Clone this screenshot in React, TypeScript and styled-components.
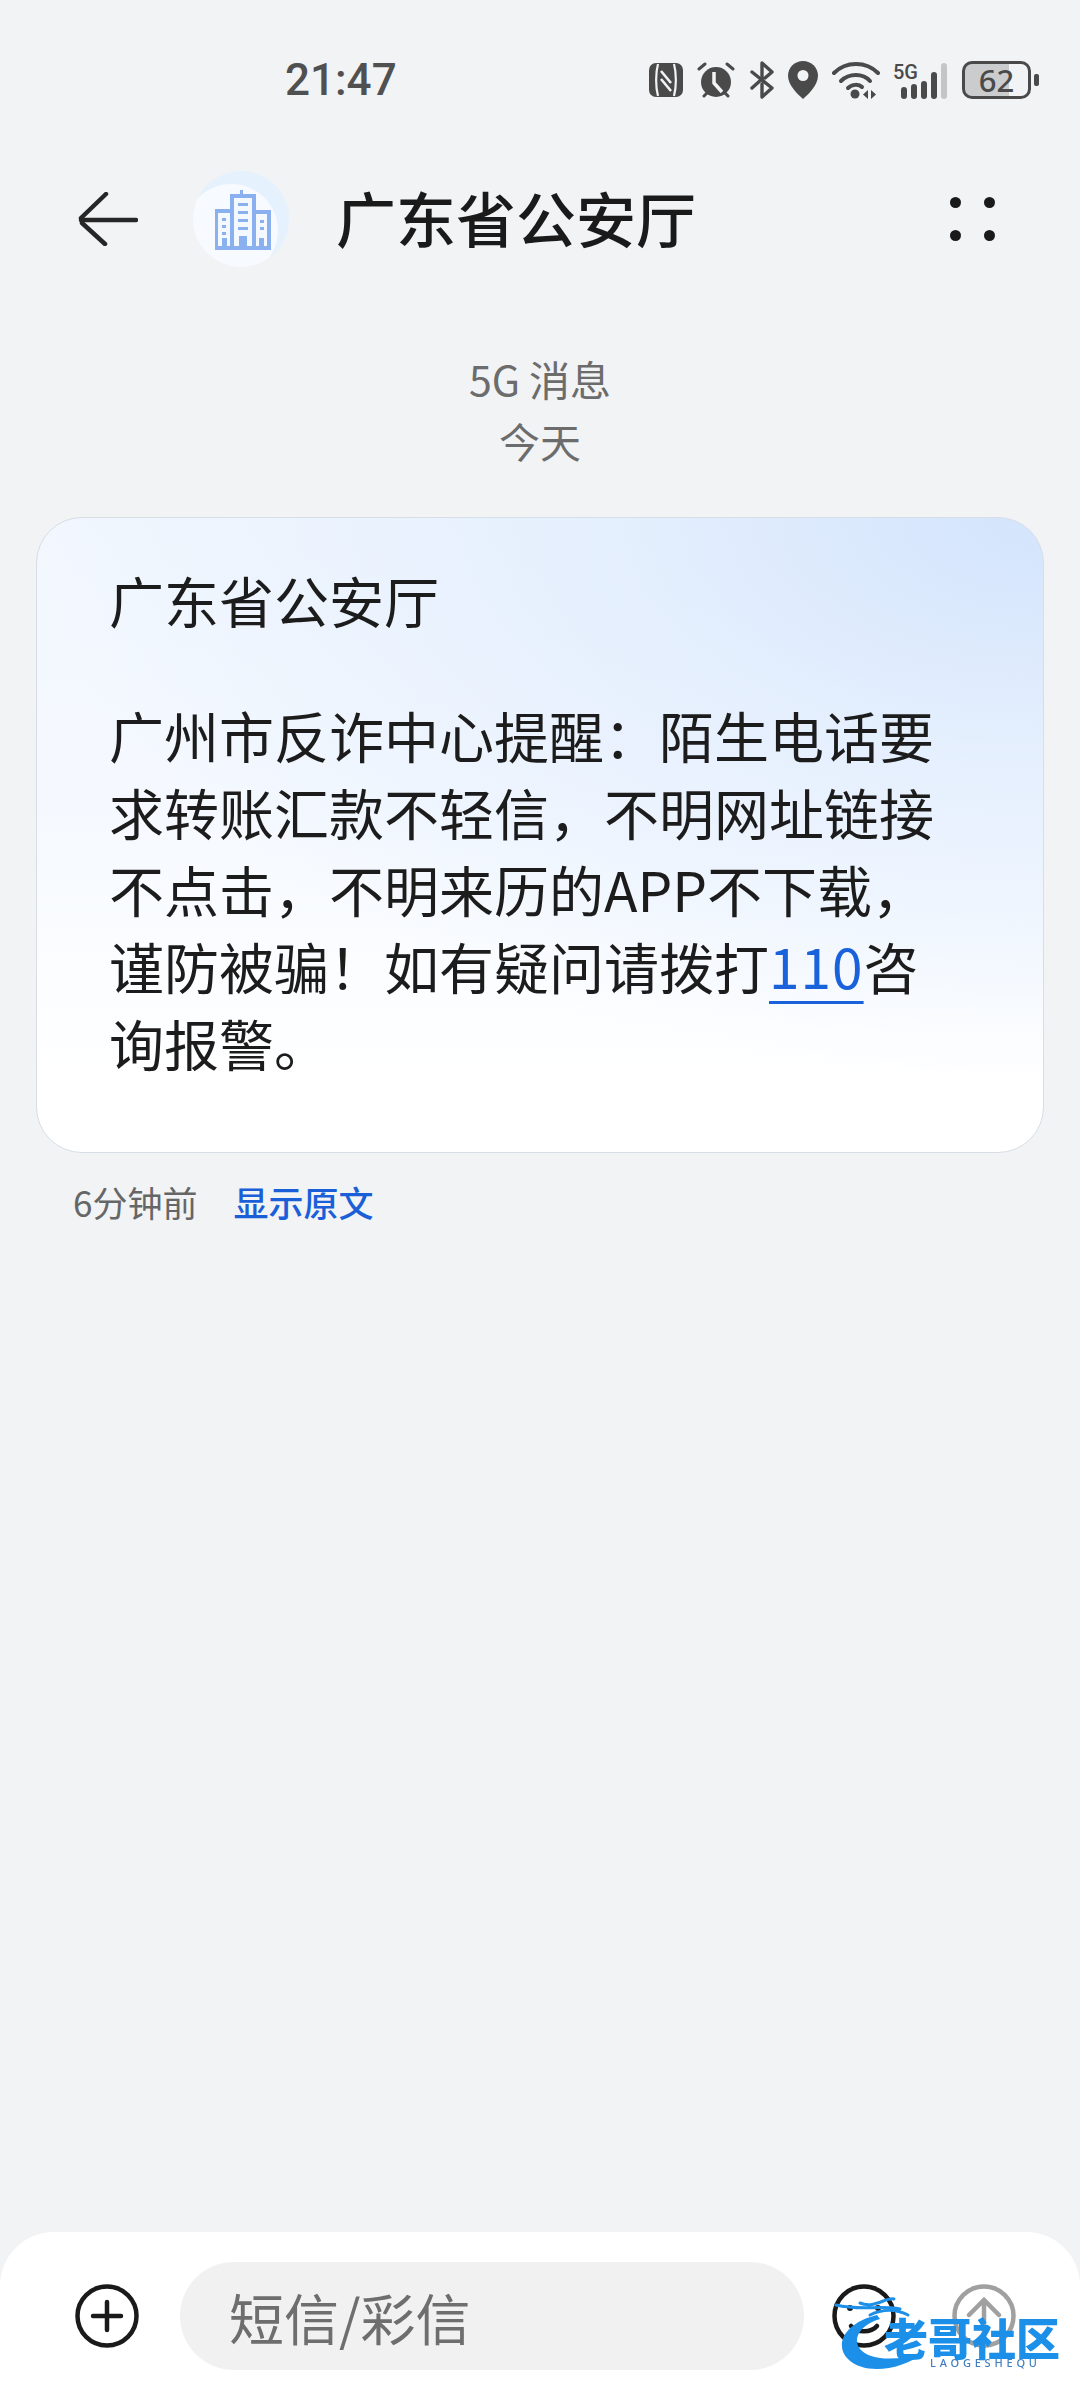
import styled, { createGlobalStyle } from "styled-components";

const GlobalStyle = createGlobalStyle`
  body {
    margin: 0;
    background: #f1f3f5;
    font-family: "Noto Sans CJK SC", "Noto Sans", sans-serif;
  }
`;

const Page = styled.div`
  position: relative;
  width: 1080px;
  height: 2400px;
  display: flex;
  flex-direction: column;
  overflow: hidden;
  background: #f1f3f5;
`;

const StatusBar = styled.div`
  height: 44px;
  margin-top: 58px;
  padding: 0 41px 0 285px;
  display: flex;
  justify-content: space-between;
  align-items: center;
`;

const Clock = styled.span`
  font-family: Roboto, sans-serif;
  font-size: 44px;
  font-weight: 500;
  line-height: 44px;
  color: #505050;
`;

const StatusIcons = styled.div`
  display: flex;
  align-items: center;
`;

const StatusIcon = styled.svg<{ $gap: number }>`
  display: block;
  margin-right: ${(p) => p.$gap}px;
  color: #4a4a4a;
`;

const Battery = styled.div<{ $level: number }>`
  width: 69px;
  height: 38px;
  box-sizing: border-box;
  display: flex;
  justify-content: center;
  align-items: center;
  border: 3px solid #4a4a4a;
  border-radius: 10px;
  background: linear-gradient(90deg, #cbccce ${(p) => p.$level}%, transparent ${(p) => p.$level}%);
  font-family: "Noto Sans", sans-serif;
  font-size: 31px;
  font-weight: 500;
  line-height: 1;
  color: #4a4a4a;
`;

const BatteryTip = styled.div`
  width: 5px;
  height: 12px;
  margin-left: 3px;
  border-radius: 2px;
  background: #4a4a4a;
`;

const Header = styled.header`
  height: 120px;
  margin-top: 57px;
  padding: 0 0 0 78px;
  display: flex;
  align-items: center;
`;

const Avatar = styled.div`
  width: 96px;
  height: 96px;
  margin-left: 55px;
  flex: none;
  display: flex;
  justify-content: center;
  align-items: center;
  border-radius: 50%;
  background: radial-gradient(circle at 40% 62%, #f7faff 0 46px, #e6f1fe 47px);
`;

const HeaderTitle = styled.h1`
  flex: 1;
  margin: 0 0 4px 47px;
  font-size: 60px;
  font-weight: 500;
  line-height: 80px;
  color: #1a1a1a;
`;

const MenuDots = styled.div`
  display: grid;
  grid-template-columns: 11px 11px;
  grid-template-rows: 11px 11px;
  gap: 22px 23px;
  margin-right: 85px;
`;

const Dot = styled.span`
  border-radius: 50%;
  background: #1a1a1a;
`;

const Notice = styled.div`
  margin-top: 68px;
  text-align: center;
  font-size: 41px;
  line-height: 62px;
  color: #6c6c6c;
`;

const Card = styled.section`
  margin: 46px 36px 0;
  padding: 43px 96px 71px 72px;
  box-sizing: border-box;
  border: 1.5px solid #d8dee6;
  border-radius: 46px;
  background:
    radial-gradient(ellipse 1000px 560px at 100% 0%, #d3e4fc 0%, rgba(222, 235, 253, 0.7) 42%, rgba(240, 246, 255, 0) 100%),
    linear-gradient(180deg, #f2f7fe 0%, #f5f9ff 45%, #fbfdff 72%, #ffffff 90%);
  font-size: 55px;
  line-height: 77px;
  color: #1c1c1c;
`;

const CardTitle = styled.div`
  margin-bottom: 58px;
`;

const CardBody = styled.div``;

const PhoneLink = styled.span`
  color: #1a62db;
  letter-spacing: 1px;
  text-decoration: underline;
  text-decoration-thickness: 3px;
  text-underline-offset: 12px;
  text-decoration-skip-ink: none;
`;

const MetaRow = styled.div`
  margin-top: 26px;
  padding-left: 73px;
  display: flex;
  gap: 36px;
  font-size: 35px;
  line-height: 46px;
`;

const Age = styled.span`
  color: #666666;
`;

const ShowOriginal = styled.span`
  color: #1a5fd8;
  font-weight: 500;
`;

const Spacer = styled.div`
  flex: 1;
`;

const Compose = styled.div`
  height: 168px;
  box-sizing: border-box;
  padding: 30px 0 30px 75px;
  display: flex;
  align-items: center;
  border-radius: 54px 54px 0 0;
  background: #ffffff;
`;

const RoundIcon = styled.svg<{ $left: number; $tone: string }>`
  flex: none;
  display: block;
  margin-left: ${(p) => p.$left}px;
  color: ${(p) => p.$tone};
`;

const Input = styled.div`
  width: 624px;
  height: 108px;
  margin-left: 41px;
  padding-left: 49px;
  box-sizing: border-box;
  display: flex;
  align-items: center;
  border-radius: 54px;
  background: #f1f1f2;
  font-size: 55px;
  color: #6e6e6e;
`;

const Watermark = styled.div`
  position: absolute;
  left: 830px;
  top: 2293px;
  width: 240px;
  height: 84px;
  filter: blur(0.7px);
`;

const Swirl = styled.svg`
  position: absolute;
  left: 0;
  top: 0;
`;

const WatermarkName = styled.div`
  position: absolute;
  left: 54px;
  top: 22px;
  font-size: 44px;
  font-weight: 900;
  line-height: 44px;
  white-space: nowrap;
  color: #1c8fe9;
`;

const WatermarkSub = styled.div`
  position: absolute;
  left: 100px;
  top: 64px;
  font-family: "Noto Sans", sans-serif;
  font-size: 11px;
  font-weight: 500;
  line-height: 11px;
  letter-spacing: 3.8px;
  white-space: nowrap;
  color: #3f7fc0;
`;

const BackArrow = () => (
  <svg width="60" height="54" viewBox="0 0 60 54" fill="none" stroke="#262626" strokeWidth="4.5" strokeLinecap="round">
    <path d="M58 28H3" />
    <path d="M3 26L28 2" />
    <path d="M4 31L27 52" />
  </svg>
);

const BuildingIcon = () => (
  <svg width="56" height="60" viewBox="0 0 56 60" style={{ marginLeft: 4, marginTop: 2 }}>
    <path fill="#8ab0f0" d="M25 0h3v4h13v16h15v40H0V19h15V4h10z" />
    <path fill="#f4f8ff" d="M19 8h18v48h-5V46h-8v10h-5zM3 23h12v33h-3v-8H7v8H3zM41 24h11v32h-3v-8h-5v8h-3z" />
    <path fill="#8ab0f0" d="M23 13h10v3H23zM23 21h10v3H23zM23 29h10v3H23zM23 37h10v3H23zM7 28h4v3H7zM7 35h4v3H7zM7 42h4v3H7zM45 30h4v3h-4zM45 37h4v3h-4z" />
  </svg>
);

const NfcIcon = () => (
  <StatusIcon $gap={14} width="34" height="34" viewBox="0 0 34 34">
    <rect width="34" height="34" rx="7" fill="currentColor" />
    <path d="M9 1C6.5 10 6.5 24 9 33M25 1C27.5 10 27.5 24 25 33" stroke="#f1f3f5" strokeWidth="2.2" fill="none" />
    <path d="M12 8L22 20M12 16L22 28" stroke="#f1f3f5" strokeWidth="2.6" fill="none" />
  </StatusIcon>
);

const AlarmIcon = () => (
  <StatusIcon $gap={15} width="38" height="38" viewBox="0 0 38 38">
    <circle cx="19" cy="21" r="15" fill="currentColor" />
    <path d="M17 11V22L25 31" stroke="#f1f3f5" strokeWidth="3.5" fill="none" />
    <path d="M2 8L8 3M36 8L30 3M7 35L10 32M31 35L28 32" stroke="currentColor" strokeWidth="3" strokeLinecap="round" />
  </StatusIcon>
);

const BluetoothIcon = () => (
  <StatusIcon $gap={14} width="24" height="38" viewBox="0 0 24 38" fill="none" stroke="currentColor" strokeWidth="3.4" strokeLinecap="round" strokeLinejoin="round">
    <path d="M2 11L22 27L12 36V23" />
    <path d="M2 27L12 18V2L22 11L15 17" />
  </StatusIcon>
);

const LocationIcon = () => (
  <StatusIcon $gap={14} width="30" height="38" viewBox="0 0 30 38">
    <path fill="currentColor" d="M15 0C6.7 0 0 6.5 0 14.6C0 24 9 33 15 38C21 33 30 24 30 14.6C30 6.5 23.3 0 15 0Z" />
    <circle cx="15" cy="14.5" r="5.5" fill="#f1f3f5" />
  </StatusIcon>
);

const WifiIcon = () => (
  <StatusIcon $gap={13} width="48" height="38" viewBox="0 0 48 38" fill="none" stroke="currentColor" strokeWidth="4" strokeLinecap="round">
    <path d="M2 12C14 0 34 0 46 12" />
    <path d="M9 20C17 12 31 12 38 20" />
    <path d="M16 27C20 23 27 23 30 26" />
    <circle cx="23" cy="33" r="4.5" fill="currentColor" stroke="none" />
    <path d="M36 29L31 33.5L36 38ZM39 29L44 33.5L39 38Z" fill="currentColor" stroke="none" />
  </StatusIcon>
);

const SignalIcon = () => (
  <StatusIcon $gap={15} width="54" height="38" viewBox="0 0 54 38">
    <text x="0" y="18" fontFamily="Roboto, sans-serif" fontSize="21" fontWeight="500" fill="currentColor" textLength="25" lengthAdjust="spacingAndGlyphs">
      5G
    </text>
    <rect x="8" y="26" width="6" height="12" rx="3" fill="currentColor" />
    <rect x="18" y="23" width="6" height="15" rx="3" fill="currentColor" />
    <rect x="28" y="20" width="6" height="18" rx="3" fill="currentColor" />
    <rect x="38" y="11" width="6" height="27" rx="3" fill="currentColor" />
    <rect x="48" y="2" width="6" height="36" rx="3" fill="#c4c5c7" />
  </StatusIcon>
);

const App = () => {
  return (
    <Page lang="zh-CN">
      <GlobalStyle />
      <StatusBar>
        <Clock>21:47</Clock>
        <StatusIcons>
          <NfcIcon />
          <AlarmIcon />
          <BluetoothIcon />
          <LocationIcon />
          <WifiIcon />
          <SignalIcon />
          <Battery $level={70}>62</Battery>
          <BatteryTip />
        </StatusIcons>
      </StatusBar>

      <Header>
        <BackArrow />
        <Avatar>
          <BuildingIcon />
        </Avatar>
        <HeaderTitle>广东省公安厅</HeaderTitle>
        <MenuDots>
          <Dot />
          <Dot />
          <Dot />
          <Dot />
        </MenuDots>
      </Header>

      <Notice>
        <div>5G 消息</div>
        <div>今天</div>
      </Notice>

      <Card>
        <CardTitle>广东省公安厅</CardTitle>
        <CardBody>
          {"广州市反诈中心提醒\uFF1A陌生电话要求转账汇款不轻信\uFF0C不明网址链接不点击\uFF0C不明来历的APP不下载\uFF0C谨防被骗\uFF01如有疑问请拨打"}
          <PhoneLink>110</PhoneLink>咨询报警。
        </CardBody>
      </Card>

      <MetaRow>
        <Age>6分钟前</Age>
        <ShowOriginal>显示原文</ShowOriginal>
      </MetaRow>

      <Spacer />

      <Compose>
        <RoundIcon $left={0} $tone="#1a1a1a" width="64" height="64" viewBox="0 0 64 64" fill="none" stroke="currentColor" strokeWidth="4.5" strokeLinecap="round">
          <circle cx="32" cy="32" r="29.5" />
          <path d="M32 18V46M18 32H46" />
        </RoundIcon>
        <Input>短信/彩信</Input>
        <RoundIcon $left={28} $tone="#1a1a1a" width="64" height="64" viewBox="0 0 64 64" fill="none" stroke="currentColor" strokeWidth="4.5" strokeLinecap="round">
          <circle cx="32" cy="32" r="29.5" />
          <circle cx="18" cy="24" r="3" fill="currentColor" stroke="none" />
          <circle cx="46" cy="24" r="3" fill="currentColor" stroke="none" />
          <path d="M19 42C25 49 39 49 45 42" />
        </RoundIcon>
        <RoundIcon $left={56} $tone="#a0a0a0" width="64" height="64" viewBox="0 0 64 64" fill="none" stroke="currentColor" strokeWidth="4.5" strokeLinecap="round">
          <circle cx="32" cy="32" r="29.5" />
          <path d="M32 16V62M17 31L32 16L47 31" />
        </RoundIcon>
      </Compose>

      <Watermark>
        <Swirl width="120" height="84" viewBox="0 0 120 84" fill="none">
          <path d="M47 22C14 30 4 52 18 66C34 82 70 78 94 60C68 68 40 68 30 56C22 46 30 32 50 26Z" fill="#1c8fe9" />
          <path d="M6 12C30 18 50 12 70 16M30 10C44 16 56 4 64 6M40 22C52 16 66 16 78 22" stroke="#1c8fe9" strokeWidth="3" strokeLinecap="round" />
        </Swirl>
        <WatermarkName>老哥社区</WatermarkName>
        <WatermarkSub>LAOGESHEQU</WatermarkSub>
      </Watermark>
    </Page>
  );
};

export default App;
